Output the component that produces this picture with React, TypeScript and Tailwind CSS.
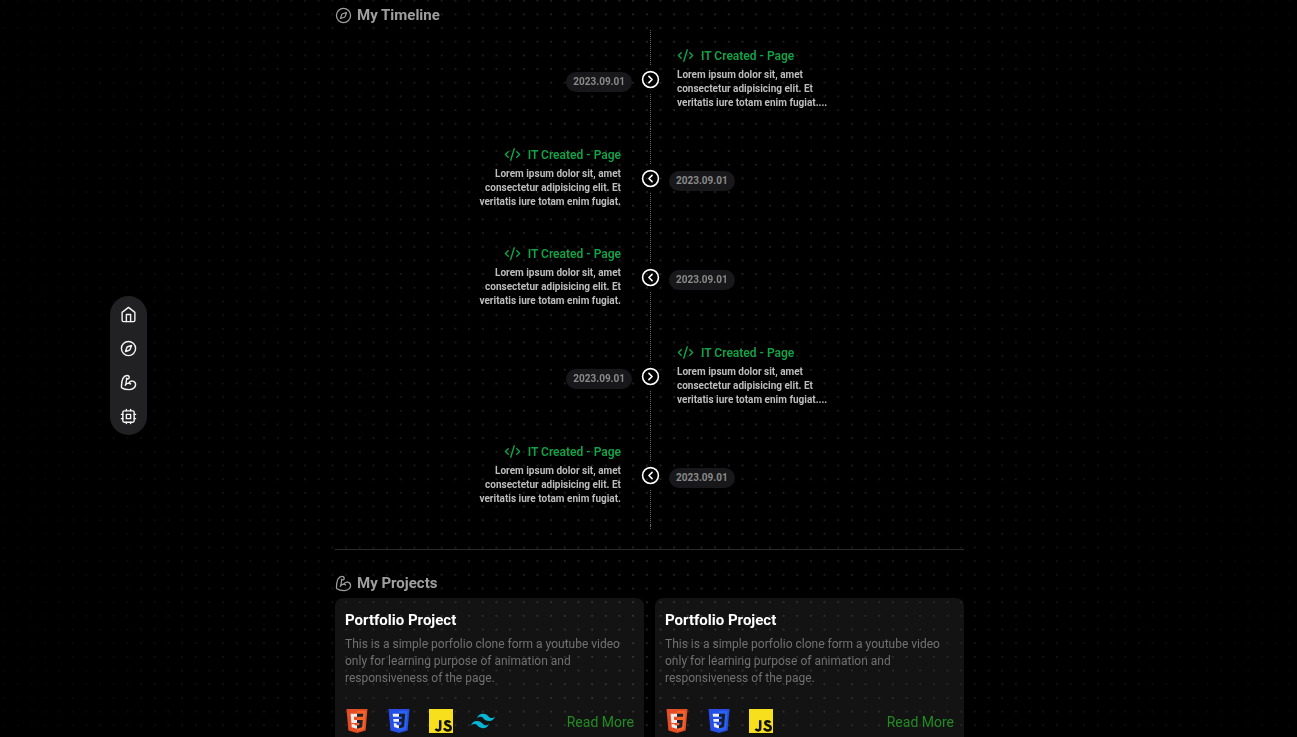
import React from "react";
import {
  BicepsFlexed,
  CircleChevronLeft,
  CircleChevronRight,
  CodeXml,
  Compass,
} from "lucide-react";

type IconProps = { className?: string };

function HomeIcon({ className }: IconProps) {
  return (
    <svg viewBox="0 0 24 24" fill="none" stroke="currentColor" strokeWidth="2" strokeLinecap="round" strokeLinejoin="round" className={className} aria-hidden="true">
      <path d="m3 9 9-7 9 7v11a2 2 0 0 1-2 2H5a2 2 0 0 1-2-2z" />
      <path d="M9 22V12h6v10" />
    </svg>
  );
}

function CpuIcon({ className }: IconProps) {
  return (
    <svg viewBox="0 0 24 24" fill="none" stroke="currentColor" strokeWidth="2" strokeLinecap="round" strokeLinejoin="round" className={className} aria-hidden="true">
      <rect x="4" y="4" width="16" height="16" rx="2" />
      <rect x="9" y="9" width="6" height="6" />
      <path d="M15 2v2M15 20v2M2 15h2M2 9h2M20 15h2M20 9h2M9 2v2M9 20v2" />
    </svg>
  );
}

function HtmlLogo() {
  return (
    <svg viewBox="0 0 24 24" className="size-6" role="img" aria-label="HTML5">
      <path fill="#e44d26" d="M1.500 0h21l-1.900 21.400L12 24l-8.600-2.600z" />
      <path fill="#f16529" d="M12 1.900v20.200l7-2.100L20.600 1.900z" />
      <path fill="#f1ece9" d="M12 4.800H5.600l.8 9.300H12v-3H9.200l-.25-3.300H12zM12 16.600l-2.400-.7-.1-1H6.500l.25 3.400L12 19.800z" />
      <path fill="#20212b" d="M12 4.800v3h5.900l.3-3zM12 11.100v3h2.500l-.2 1.800-2.300.7v3.200l5.100-1.500.7-7.200z" />
    </svg>
  );
}

function CssLogo() {
  return (
    <svg viewBox="0 0 24 24" className="size-6" role="img" aria-label="CSS3">
      <path fill="#264de4" d="M1.500 0h21l-1.900 21.400L12 24l-8.600-2.600z" />
      <path fill="#2965f1" d="M12 1.900v20.200l7-2.100L20.600 1.900z" />
      <path fill="#ebeef8" d="M12 4.800H5.700l.25 2.900H12zM12 9.900H6.300l.25 2.900H12zM12 16.400l-2.400-.7-.1-1.400H6.700l.3 3.600 5 1.500z" />
      <path fill="#171c33" d="M12 4.800v2.900h3l-.2 2.200H12v2.900h2.600l-.25 2.900-2.350.7v3l5-1.500L18.200 4.800z" />
    </svg>
  );
}

function JsLogo() {
  return (
    <svg viewBox="0 0 24 24" className="size-6" role="img" aria-label="JavaScript">
      <path fill="#f7df1e" d="M0 0h24v24H0z" />
      <g fill="none" stroke="#111" strokeWidth="2.500">
        <path d="M11.200 11.200v7.900c0 1.600-.8 2.300-2.100 2.300-1.100 0-1.900-.6-2.400-1.700" />
        <path d="M21.200 13.600c-.6-1-1.400-1.400-2.600-1.400-1.400 0-2.300.7-2.300 1.800 0 2.900 5.400 1.600 5.400 4.900 0 1.600-1.300 2.500-3.100 2.500-1.700 0-2.900-.8-3.500-2.100" />
      </g>
    </svg>
  );
}

function TailwindLogo() {
  return (
    <svg viewBox="0 0 24 24" className="size-6" role="img" aria-label="Tailwind CSS">
      <path
        fill="#06b6d4"
        d="M12.001 4.800c-3.200 0-5.200 1.600-6 4.800 1.200-1.600 2.600-2.200 4.200-1.800.913.228 1.565.89 2.288 1.624C13.666 10.618 15.027 12 18.001 12c3.200 0 5.200-1.600 6-4.800-1.200 1.600-2.600 2.200-4.200 1.800-.913-.228-1.565-.89-2.288-1.624C16.337 6.182 14.976 4.800 12.001 4.800zm-6 7.200c-3.200 0-5.200 1.600-6 4.800 1.200-1.600 2.600-2.200 4.200-1.800.913.228 1.565.89 2.288 1.624 1.177 1.194 2.538 2.576 5.512 2.576 3.200 0 5.200-1.600 6-4.800-1.200 1.600-2.600 2.200-4.200 1.800-.913-.228-1.565-.89-2.288-1.624C10.337 13.382 8.976 12 6.001 12z"
      />
    </svg>
  );
}

/** Dot grid behind the page, fading out towards both sides. */
function DotGrid() {
  return (
    <svg className="pointer-events-none fixed inset-0 size-full" aria-hidden="true">
      <defs>
        <pattern id="dots" width="13.67" height="13.67" patternUnits="userSpaceOnUse" x="-2.500" y="-6.100">
          <circle cx="6.830" cy="6.830" r="0.850" fill="#383838" />
        </pattern>
        <linearGradient id="fade">
          <stop offset="0" stopColor="#fff" stopOpacity="0.150" />
          <stop offset="0.500" stopColor="#fff" />
          <stop offset="1" stopColor="#fff" stopOpacity="0.150" />
        </linearGradient>
        <mask id="sides">
          <rect width="100%" height="100%" fill="url(#fade)" />
        </mask>
      </defs>
      <rect width="100%" height="100%" fill="url(#dots)" mask="url(#sides)" />
    </svg>
  );
}

const navItems = [
  { label: "Home", href: "#home", Icon: HomeIcon },
  { label: "Timeline", href: "#timeline", Icon: Compass },
  { label: "Projects", href: "#projects", Icon: BicepsFlexed },
  { label: "Skills", href: "#skills", Icon: CpuIcon },
];

function SideNav() {
  return (
    <div className="pointer-events-none fixed inset-y-0 left-[110px] z-10 flex items-center pb-[7px]">
      <nav className="pointer-events-auto flex flex-col gap-[17px] rounded-full bg-[#27272a]/85 px-[10px] py-[10px] text-[#f2f2f2]">
        {navItems.map(({ label, href, Icon }) => (
          <a key={label} href={href} aria-label={label}>
            <Icon className="size-[17px]" />
          </a>
        ))}
      </nav>
    </div>
  );
}

type Side = "left" | "right";

const entries: { side: Side; text: string }[] = [
  { side: "right", text: "Lorem ipsum dolor sit, amet consectetur adipisicing elit. Et veritatis iure totam enim fugiat...." },
  { side: "left", text: "Lorem ipsum dolor sit, amet consectetur adipisicing elit. Et veritatis iure totam enim fugiat." },
  { side: "left", text: "Lorem ipsum dolor sit, amet consectetur adipisicing elit. Et veritatis iure totam enim fugiat." },
  { side: "right", text: "Lorem ipsum dolor sit, amet consectetur adipisicing elit. Et veritatis iure totam enim fugiat...." },
  { side: "left", text: "Lorem ipsum dolor sit, amet consectetur adipisicing elit. Et veritatis iure totam enim fugiat." },
];

function EntryBody({ side, text }: { side: Side; text: string }) {
  return (
    <div className={side === "left" ? "flex flex-col items-end pr-[15px] pb-[3px] text-right" : "flex flex-col items-start pb-[3px] pl-3"}>
      <h3 className="flex items-center gap-[7px] text-[12px] leading-[18px] font-semibold text-[#11a345]">
        <CodeXml className="size-[17px]" />
        IT Created - Page
      </h3>
      <p className="mt-[3px] w-[156px] text-[10px] leading-[14px] font-bold text-[#bdbdbd]">{text}</p>
    </div>
  );
}

function EntryDate({ side }: { side: Side }) {
  return (
    <div className={side === "left" ? "flex justify-end pt-1 pr-1" : "flex justify-start pt-1 pl-1"}>
      <time dateTime="2023-09-01" className="rounded-full bg-[#18181b] px-[7px] text-[10px] leading-[20px] font-bold text-[#8a8a8a]">
        2023.09.01
      </time>
    </div>
  );
}

function TimelineEntry({ side, text }: { side: Side; text: string }) {
  const Chevron = side === "right" ? CircleChevronRight : CircleChevronLeft;
  return (
    <li className="grid h-[99px] grid-cols-[1fr_29px_1fr] items-center">
      {side === "left" ? <EntryBody side="left" text={text} /> : <EntryDate side="left" />}
      <div className="flex h-full flex-col items-center">
        <span className="w-px flex-1 border-l border-dotted border-[#666666]" />
        <span className="flex h-[29px] items-center text-white">
          <Chevron className="size-[19px]" />
        </span>
        <span className="w-px flex-1 border-l border-dotted border-[#666666]" />
      </div>
      {side === "right" ? <EntryBody side="right" text={text} /> : <EntryDate side="right" />}
    </li>
  );
}

const projects = [
  { id: 1, logos: [HtmlLogo, CssLogo, JsLogo, TailwindLogo] },
  { id: 2, logos: [HtmlLogo, CssLogo, JsLogo] },
];

function ProjectCard({ logos }: { logos: React.ComponentType[] }) {
  return (
    <article className="rounded-lg bg-[#f0f0ff]/8 p-[10px]">
      <h3 className="text-[15px] leading-6 font-bold text-white">Portfolio Project</h3>
      <p className="mt-1 text-[12px] leading-[17px] text-[#717171]">
        This is a simple porfolio clone form a youtube video only for learning purpose of animation and responsiveness of the page.
      </p>
      <div className="mt-[22px] flex items-start justify-between">
        <div className="flex gap-[18px]">
          {logos.map((Logo, i) => (
            <Logo key={i} />
          ))}
        </div>
        <a href="#projects" className="text-[14px] leading-[26px] text-[#228b22]">
          Read More
        </a>
      </div>
    </article>
  );
}

function SectionTitle({ icon, children }: { icon: React.ReactNode; children: React.ReactNode }) {
  return (
    <h2 className="flex items-center gap-[5px] text-[15px] leading-[26px] font-bold text-[#9f9f9f]">
      {icon}
      {children}
    </h2>
  );
}

export default function App() {
  return (
    <div className="min-h-screen bg-black pl-0.5 font-['Roboto',sans-serif]">
      <DotGrid />
      <SideNav />
      <main className="relative mx-auto max-w-[629px] pt-0.5">
        <section id="timeline">
          <SectionTitle icon={<Compass className="size-[17px]" strokeWidth={1.75} />}>My Timeline</SectionTitle>
          <ol className="mt-0.5 pl-0.5">
            {entries.map((entry, i) => (
              <TimelineEntry key={i} side={entry.side} text={entry.text} />
            ))}
            <li aria-hidden="true" className="flex h-1 justify-center">
              <span className="w-px border-l border-dotted border-[#666666]" />
            </li>
          </ol>
        </section>
        <hr className="mt-5 border-[#2c2c2f]" />
        <section id="projects" className="mt-5">
          <SectionTitle icon={<BicepsFlexed className="size-[17px]" strokeWidth={1.75} />}>My Projects</SectionTitle>
          <div className="mt-0.5 grid grid-cols-2 gap-[11px]">
            {projects.map((project) => (
              <ProjectCard key={project.id} logos={project.logos} />
            ))}
          </div>
        </section>
      </main>
    </div>
  );
}
